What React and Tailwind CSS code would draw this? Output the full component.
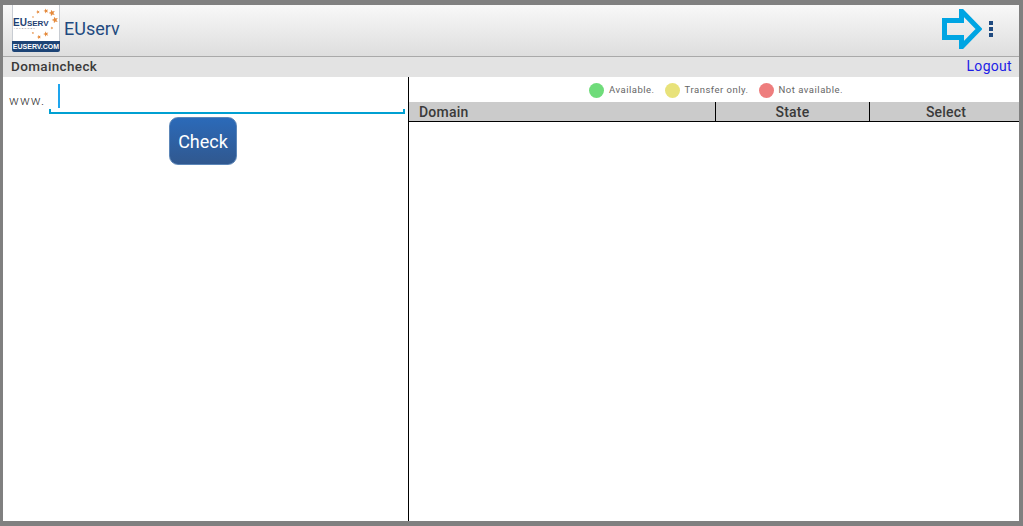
import React from 'react';

const star = (cx, cy, r) => {
  const pts = [];
  for (let i = 0; i < 10; i++) {
    const a = -Math.PI / 2 + (i * Math.PI) / 5 - 0.3;
    const d = i % 2 ? r * 0.42 : r;
    pts.push(`${(cx + d * Math.cos(a)).toFixed(1)},${(cy + d * Math.sin(a)).toFixed(1)}`);
  }
  return pts.join(' ');
};

const stars = [[51, 13, 3.4], [45, 11, 2.6], [37, 12, 2], [32, 17, 1.2], [54, 20, 3.4], [51, 28, 1.5], [45, 34, 2.8], [38, 37, 2.2], [32, 33, 1.4]];

const Logo = () => (
  <div className="flex h-[47px] w-[48px] flex-col overflow-hidden rounded-b-[2px] bg-white">
    <div className="relative flex-1 border-x border-[#c8ccd2]">
      <svg className="absolute inset-0" width="46" height="36" viewBox="0 0 46 36">
        {stars.map(([x, y, r], i) => (
          <polygon key={i} points={star(x - 12, y - 5, r)} fill="#e58a3c" />
        ))}
      </svg>
      <span className="absolute left-0 top-[11px] text-[10px] font-bold leading-[13px] text-[#1f3f73] [font-family:'Liberation_Sans',sans-serif]">
        EU<span className="text-[8px]">SERV</span>
      </span>
      <span className="absolute left-[1px] top-[22px] text-[2.500px] leading-[3px] tracking-[1.2px] text-[#777] [font-family:'Liberation_Sans',sans-serif]">
        INTERNET
      </span>
    </div>
    <div className="flex h-[11px] items-center justify-center bg-[#1d4476] text-[7px] font-bold leading-none text-white [font-family:'Liberation_Sans',sans-serif]">
      EUSERV.COM
    </div>
  </div>
);

const Arrow = () => (
  <svg width="40" height="40" viewBox="0 0 40 40" fill="none">
    <path d="M2.500 11.500H19.500V2.500H20L37 20L20 37.500H19.500V28.500H2.500Z" stroke="#00a5e3" strokeWidth="5" strokeLinejoin="miter" />
  </svg>
);

const Dot = ({ color }) => (
  <span className={`h-[15px] w-[15px] rounded-full blur-[0.7px] ${color}`} />
);

const Legend = ({ color, label }) => (
  <div className="flex items-center gap-[5px]">
    <Dot color={color} />
    <span className="text-[9.500px] tracking-[0.5px] text-[#666]">{label}</span>
  </div>
);

export default function App() {
  return (
    <div className="flex h-[526px] w-[1023px] flex-col bg-[#808080] pb-[5px] pl-[3px] pr-[4px] pt-[5px] [font-family:Roboto,sans-serif]">
      {/* Action bar */}
      <div className="flex h-[52px] shrink-0 items-start border-b border-[#a9a9a9] bg-gradient-to-b from-[#f8f8f8] to-[#dedede] pl-[9px]">
        <Logo />
        <span className="ml-[4px] mt-[11px] text-[18px] leading-[26px] text-[#1f4a80]">EUserv</span>
        <div className="ml-auto flex items-center pr-[26px] pt-[4px]">
          <Arrow />
          <div className="ml-[7px] flex flex-col gap-[2px]">
            <span className="h-[4px] w-[4px] bg-[#1f4a80]" />
            <span className="h-[4px] w-[4px] bg-[#1f4a80]" />
            <span className="h-[4px] w-[4px] bg-[#1f4a80]" />
          </div>
        </div>
      </div>

      {/* Title bar */}
      <div className="flex h-[20px] shrink-0 items-start justify-between bg-[#e3e3e3] pl-[8px] pr-[7px]">
        <span className="text-[13.500px] font-medium leading-[18px] tracking-[0.35px] text-[#3a3a3a]">Domaincheck</span>
        <a className="text-[14px] leading-[18px] tracking-[0.3px] text-[#1c1ce6]">Logout</a>
      </div>

      <div className="flex min-h-0 flex-1 bg-white">
        {/* Search form */}
        <div className="flex w-[405px] shrink-0 flex-col">
          <div className="flex h-[37px] items-start pl-[6px] pt-[7px]">
            <span className="mt-[7px] text-[13px] font-light tracking-[1.1px] text-[#333]">www.</span>
            <div className="relative ml-[4px] h-[30px] flex-1">
              <span className="absolute left-[9px] top-0 h-[24px] w-[2px] bg-[#1ea5ee]" />
              <div className="absolute bottom-0 left-0 right-[3px] h-[5px] border-x-2 border-b-2 border-[#00a0d2]" />
            </div>
          </div>
          <div className="flex justify-center pt-[3px]">
            <button className="ml-[-5px] flex h-[48px] w-[68px] items-center justify-center rounded-[9px] border border-[#5c86b8] bg-gradient-to-b from-[#2b6ab9] to-[#30588f] text-[18px] text-white">
              Check
            </button>
          </div>
        </div>

        {/* Results */}
        <div className="flex min-w-0 flex-1 flex-col border-l border-black">
          <div className="flex h-[25px] shrink-0 items-center justify-center gap-[10px] pl-[4px] pt-[1px]">
            <Legend color="bg-[#6fdc7a]" label="Available." />
            <Legend color="bg-[#e8e27a]" label="Transfer only." />
            <Legend color="bg-[#ee7d7d]" label="Not available." />
          </div>
          <div className="flex h-[20px] shrink-0 border-b border-black bg-[#cbcbcb] text-[14px] font-medium leading-[20px] tracking-[0.2px] text-[#3a3a3a]">
            <div className="w-[306px] pl-[10px]">Domain</div>
            <div className="w-[154px] border-l border-black text-center">State</div>
            <div className="flex-1 border-l border-black pl-[3px] text-center">Select</div>
          </div>
        </div>
      </div>
    </div>
  );
}
